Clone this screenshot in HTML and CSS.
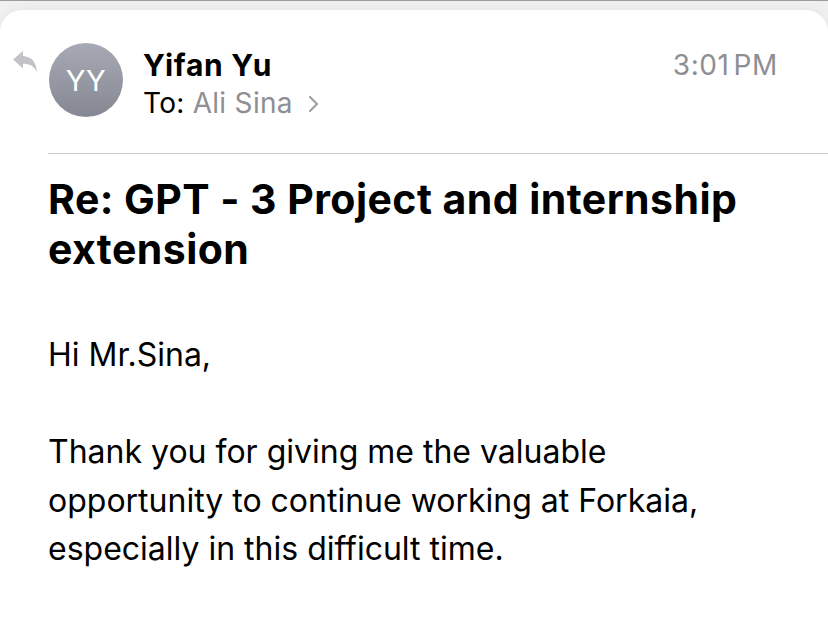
FILE: index.html
```html
<!DOCTYPE html>
<html>
<head>
<meta charset="utf-8">
<link rel="stylesheet" href="styles.css">
</head>
<body>
<div class="topline"></div>
<div class="card">
  <div class="header">
    <svg class="reply" width="24" height="21" viewBox="0 0 24 21"><path d="M0 8.5 L10 0 V5 C18 5.5 23 10 24 21 C21 15 16.5 12.8 10 12.8 V17.5 Z" fill="#c2c2c7"/></svg>
    <div class="avatar">YY</div>
    <div class="who">
      <div class="name">Yifan Yu</div>
      <div class="to">To: <span class="rcpt">Ali Sina</span><svg class="chev" width="11" height="18" viewBox="0 0 11 18"><path d="M2 2 L9 9 L2 16" fill="none" stroke="#a0a0a5" stroke-width="2.2" stroke-linecap="round" stroke-linejoin="round"/></svg></div>
    </div>
    <div class="time">3:01<span class="pm">PM</span></div>
  </div>
  <div class="divider"></div>
  <h1 class="subject">Re: GPT - 3 Project and internship extension</h1>
  <div class="body">
    <p>Hi Mr.Sina,</p>
    <p>Thank you for giving me the valuable opportunity to continue working at Forkaia, especially in this difficult time.</p>
  </div>
</div>
</body>
</html>
```
FILE: styles.css
```css
html, body {
  margin: 0;
  padding: 0;
  background: #f0f0f0;
  height: 100%;
  overflow: hidden;
}
body {
  font-family: Inter, "Noto Sans", sans-serif;
  color: #000;
}
.topline {
  height: 1px;
  background: #9c9c9c;
}
.card {
  margin-top: 9px;
  background: #fff;
  border-radius: 22px 22px 0 0;
  box-shadow: 0 -2px 10px rgba(0,0,0,0.04);
  height: 620px;
  padding-left: 48px;
  padding-top: 33px;
  box-sizing: border-box;
}
.header {
  display: flex;
  align-items: flex-start;
  margin-left: -35px;
  padding-right: 50px;
}
.reply {
  margin-top: 8px;
  margin-right: 12px;
  flex: none;
}
.avatar {
  width: 74px;
  height: 74px;
  border-radius: 50%;
  background: linear-gradient(#a7aab4, #858892);
  color: #fff;
  font-size: 29px;
  display: flex;
  align-items: center;
  justify-content: center;
  letter-spacing: 0.5px;
  flex: none;
}
.who {
  margin-left: 20px;
  flex: 1;
}
.name {
  font-size: 30px;
  font-weight: 700;
  line-height: 40px;
  margin-top: 2px;
  letter-spacing: 0.7px;
}
.to {
  font-size: 28px;
  line-height: 36px;
  display: flex;
  align-items: center;
  letter-spacing: 0.3px;
}
.rcpt {
  color: #8e8e93;
  margin-left: 8px;
}
.chev {
  margin-left: 15px;
  margin-top: 2px;
}
.time {
  font-size: 28px;
  color: #8e8e93;
  line-height: 40px;
  margin-top: 2px;
  letter-spacing: 0.6px;
}
.pm {
  margin-left: 4px;
}
.divider {
  height: 1px;
  background: #c8c8c8;
  margin-top: 32px;
}
.subject {
  font-size: 41px;
  font-weight: 700;
  line-height: 50px;
  margin: 20px 0 0 0;
  padding-right: 60px;
  letter-spacing: 0.45px;
}
.body {
  font-size: 32px;
  line-height: 48.5px;
  margin-top: 57px;
  padding-right: 90px;
}
.body p {
  margin: 0 0 48.5px 0;
}
```
